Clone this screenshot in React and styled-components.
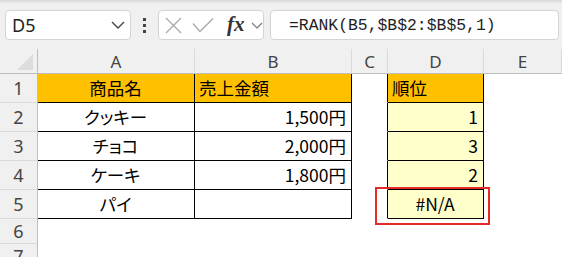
import React from "react";
import styled, { createGlobalStyle } from "styled-components";

const GlobalStyle = createGlobalStyle`
  html, body {
    margin: 0;
    padding: 0;
    background: #fff;
    overflow: hidden;
  }
  body {
    font-family: "Noto Sans", "Noto Sans CJK JP", sans-serif;
  }
`;

const Window = styled.div`
  width: 562px;
  height: 257px;
  overflow: hidden;
  background: #fff;
`;

const Toolbar = styled.div`
  height: 49px;
  box-sizing: border-box;
  display: flex;
  align-items: flex-start;
  padding: 10px 0 0 5px;
  background: linear-gradient(#d8d8d8, #f0f0f0 4px);
`;

const InputBox = styled.div`
  height: 30px;
  box-sizing: border-box;
  background: #fff;
  border: 1px solid #d4d4d4;
  border-radius: 4px;
  display: flex;
  align-items: center;
`;

const NameBox = styled(InputBox)`
  width: 126px;
  padding: 0 5px 0 6px;
  justify-content: space-between;
  font-size: 18px;
  color: #222;
`;

const Dots = styled.div`
  width: 27px;
  height: 30px;
  display: flex;
  flex-direction: column;
  align-items: center;
  justify-content: center;
  gap: 3px;

  span {
    width: 3px;
    height: 3px;
    background: #444;
  }
`;

const FuncBox = styled(InputBox)`
  width: 106px;
  padding-left: 6px;
`;

const Slot = styled.span`
  display: flex;
  margin-left: ${(p) => p.$ml || 0}px;
`;

const Fx = styled.span`
  margin-left: 13px;
  font-family: "Liberation Serif", serif;
  font-style: italic;
  font-weight: bold;
  font-size: 21px;
  line-height: 1;
  color: #333;
  margin-top: -2px;
`;

const FormulaBox = styled(InputBox)`
  flex: 1;
  margin: 0 3px 0 6px;
  padding-left: 18px;
  font-family: "Liberation Mono", monospace;
  font-size: 16.4px;
  color: #1e1e1e;
`;

const Sheet = styled.div`
  display: grid;
  grid-template-columns: 38px 157px 157px 36px 96px 1fr;
  grid-template-rows: 25px repeat(5, 29px) 25px 25px;
`;

const Corner = styled.div`
  position: relative;
  background: #f0f0f0;
  border-right: 1px solid #bdbdbd;
  border-bottom: 1px solid #bdbdbd;

  &::after {
    content: "";
    position: absolute;
    right: 4px;
    bottom: 3px;
    width: 0;
    height: 0;
    border-left: 16px solid transparent;
    border-bottom: 16px solid #dcdcdc;
  }
`;

const ColHead = styled.div`
  background: #f0f0f0;
  border-right: 1px solid #dadada;
  border-bottom: 1px solid #bdbdbd;
  display: flex;
  align-items: center;
  justify-content: center;
  font-size: 17px;
  color: #444;
`;

const RowHead = styled.div`
  background: #f0f0f0;
  border-right: 1px solid #bdbdbd;
  border-bottom: 1px solid #dadada;
  display: flex;
  align-items: center;
  justify-content: center;
  font-size: 18px;
  color: #444;
`;

const Cell = styled.div`
  position: relative;
  box-sizing: border-box;
  background: ${(p) => p.$fill || "#fff"};
  border-right: 1px solid ${(p) => (p.$right ? "#000" : "transparent")};
  border-bottom: 1px solid ${(p) => (p.$bottom ? "#000" : "transparent")};
  display: flex;
  align-items: center;
  justify-content: ${(p) => p.$align || "flex-start"};
  padding: 0 5px 0 4px;
  font-family: "Noto Sans CJK JP", "Noto Sans", sans-serif;
  font-feature-settings: "palt";
  font-size: 17.5px;
  line-height: 1;
  color: #000;
`;

const Highlight = styled.div`
  position: absolute;
  z-index: 2;
  left: -13px;
  top: -3px;
  width: 115px;
  height: 38px;
  box-sizing: border-box;
  border: 2px solid #e52a2a;
  pointer-events: none;
`;

const ORANGE = "#ffc000";
const PALE = "#ffffcc";

const rows = [
  { a: "商品名", b: "売上金額", d: "順位", head: true },
  { a: "クッキー", b: "1,500円", d: "1" },
  { a: "チョコ", b: "2,000円", d: "3" },
  { a: "ケーキ", b: "1,800円", d: "2" },
  { a: "パイ", b: "", d: "#N/A", active: true },
];

const Chevron = ({ w, h, color, sw }) => (
  <svg width={w} height={h} viewBox={`0 0 ${w} ${h}`}>
    <polyline
      points={`1,1 ${w / 2},${h - 1} ${w - 1},1`}
      fill="none"
      stroke={color}
      strokeWidth={sw}
    />
  </svg>
);

export default function App() {
  return (
    <Window>
      <GlobalStyle />
      <Toolbar>
        <NameBox>
          <span>D5</span>
          <Chevron w={14} h={8} color="#444" sw={1.4} />
        </NameBox>
        <Dots>
          <span />
          <span />
          <span />
        </Dots>
        <FuncBox>
          <Slot>
            <svg width="17" height="17" viewBox="0 0 17 17">
              <path d="M1 1 L16 16 M16 1 L1 16" stroke="#a9a9a9" strokeWidth="1.3" />
            </svg>
          </Slot>
          <Slot $ml={10}>
            <svg width="22" height="16" viewBox="0 0 22 16">
              <polyline points="1,6.5 8,14.5 21,1.5" fill="none" stroke="#a9a9a9" strokeWidth="1.3" />
            </svg>
          </Slot>
          <Fx>fx</Fx>
          <Slot $ml={6}>
            <Chevron w={12} h={7} color="#777" sw={1.2} />
          </Slot>
        </FuncBox>
        <FormulaBox>=RANK(B5,$B$2:$B$5,1)</FormulaBox>
      </Toolbar>

      <Sheet>
        <Corner />
        {["A", "B", "C", "D", "E"].map((c) => (
          <ColHead key={c}>{c}</ColHead>
        ))}

        {rows.map((r, i) => (
          <React.Fragment key={i}>
            <RowHead>{i + 1}</RowHead>
            <Cell $fill={r.head ? ORANGE : undefined} $right $bottom $align="center">
              {r.a}
            </Cell>
            <Cell
              $fill={r.head ? ORANGE : undefined}
              $right
              $bottom
              $align={r.head ? "flex-start" : "flex-end"}
            >
              {r.b}
            </Cell>
            <Cell $right />
            <Cell
              $fill={r.head ? ORANGE : PALE}
              $right
              $bottom
              $align={r.head ? "flex-start" : r.active ? "center" : "flex-end"}
            >
              {r.d}
              {r.active && <Highlight />}
            </Cell>
            <Cell />
          </React.Fragment>
        ))}

        {[6, 7].map((n) => (
          <React.Fragment key={n}>
            <RowHead>{n}</RowHead>
            <Cell />
            <Cell />
            <Cell />
            <Cell />
            <Cell />
          </React.Fragment>
        ))}
      </Sheet>
    </Window>
  );
}
